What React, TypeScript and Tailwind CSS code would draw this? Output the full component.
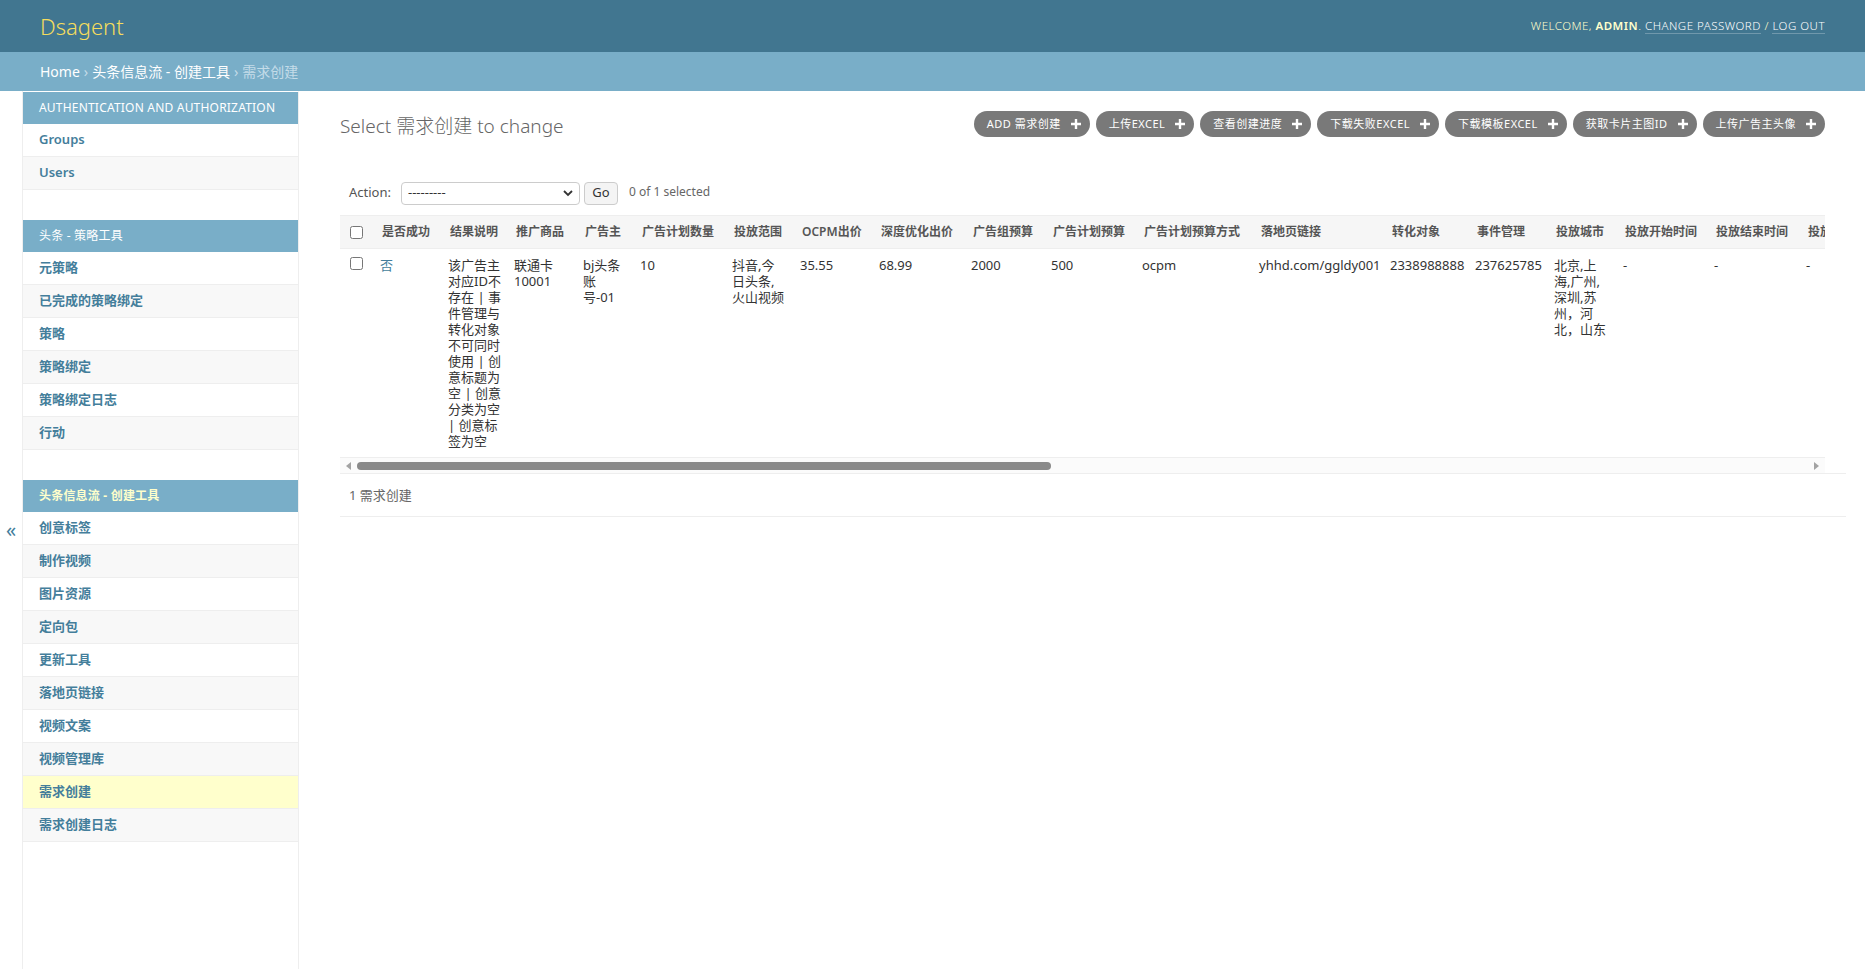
import React from "react";

const FONT = "font-[family-name:'Noto_Sans','Noto_Sans_CJK_SC',sans-serif]";

type Section = { title: string; current?: boolean; items: string[]; active?: string };

const sections: Section[] = [
  { title: "Authentication and Authorization", items: ["Groups", "Users"] },
  {
    title: "头条 - 策略工具",
    items: ["元策略", "已完成的策略绑定", "策略", "策略绑定", "策略绑定日志", "行动"],
  },
  {
    title: "头条信息流 - 创建工具",
    current: true,
    active: "需求创建",
    items: [
      "创意标签",
      "制作视频",
      "图片资源",
      "定向包",
      "更新工具",
      "落地页链接",
      "视频文案",
      "视频管理库",
      "需求创建",
      "需求创建日志",
    ],
  },
];

const tools = ["ADD 需求创建", "上传EXCEL", "查看创建进度", "下载失败EXCEL", "下载模板EXCEL", "获取卡片主图ID", "上传广告主头像"];

type Col = { h: string; w: number; v: React.ReactNode; link?: boolean };

const L = (lines: string[]) => (
  <span className="whitespace-nowrap">
    {lines.map((l, i) => (
      <React.Fragment key={i}>
        {l}
        {i < lines.length - 1 && <br />}
      </React.Fragment>
    ))}
  </span>
);

const cols: Col[] = [
  { h: "是否成功", w: 68, v: "否", link: true },
  {
    h: "结果说明",
    w: 66,
    v: L([
      "该广告主",
      "对应ID不",
      "存在 | 事",
      "件管理与",
      "转化对象",
      "不可同时",
      "使用 | 创",
      "意标题为",
      "空 | 创意",
      "分类为空",
      "| 创意标",
      "签为空",
    ]),
  },
  { h: "推广商品", w: 69, v: L(["联通卡", "10001"]) },
  { h: "广告主", w: 57, v: L(["bj头条", "账", "号-01"]) },
  { h: "广告计划数量", w: 92, v: "10" },
  { h: "投放范围", w: 68, v: L(["抖音,今", "日头条,", "火山视频"]) },
  { h: "OCPM出价", w: 79, v: "35.55" },
  { h: "深度优化出价", w: 92, v: "68.99" },
  { h: "广告组预算", w: 80, v: "2000" },
  { h: "广告计划预算", w: 91, v: "500" },
  { h: "广告计划预算方式", w: 117, v: "ocpm" },
  { h: "落地页链接", w: 131, v: "yhhd.com/ggldy001" },
  { h: "转化对象", w: 85, v: "2338988888" },
  { h: "事件管理", w: 79, v: "237625785" },
  { h: "投放城市", w: 69, v: L(["北京,上", "海,广州,", "深圳,苏", "州，河", "北，山东"]) },
  { h: "投放开始时间", w: 91, v: "-" },
  { h: "投放结束时间", w: 92, v: "-" },
  { h: "投放时段", w: 92, v: "-" },
];

function Plus() {
  return (
    <svg width="10" height="10" viewBox="0 0 10 10" className="shrink-0">
      <path d="M3.8 0h2.4v3.8H10v2.4H6.2V10H3.8V6.2H0V3.8h3.8z" fill="#fff" />
    </svg>
  );
}

function Sidebar() {
  return (
    <nav className="w-[276px] shrink-0 bg-white border-r border-[#eee] border-t border-t-transparent">
      {sections.map((s, si) => (
        <div key={si} className="mb-[30px]">
          <div
            className={`h-[32px] flex items-center pl-4 text-[12px] uppercase tracking-[0.2px] bg-[#79aec8] whitespace-nowrap ${
              s.current ? "text-[#ffc] font-bold" : "text-white"
            }`}
          >
            {s.title}
          </div>
          {s.items.map((it, i) => (
            <div
              key={it}
              className={`h-[33px] flex items-center pl-4 border-b border-[#eee] text-[13px] font-semibold text-[#447e9b] ${
                s.active === it ? "bg-[#ffc]" : i % 2 === 1 ? "bg-[#f8f8f8]" : "bg-white"
              }`}
            >
              {it}
            </div>
          ))}
        </div>
      ))}
    </nav>
  );
}

export default function App() {
  const total = 32 + cols.reduce((a, c) => a + c.w, 0);
  return (
    <div className={`${FONT} min-h-[969px] bg-white text-[#333] text-[13px]`}>
      <header className="h-[52px] bg-[#417690] px-10 flex items-center justify-between">
        <div className="text-[22px] font-light text-[#f5dd5d] leading-[32px]">Dsagent</div>
        <div className="text-[11.5px] uppercase tracking-[0.5px] font-light text-[#ffc]">
          Welcome, <strong className="font-semibold">admin</strong>.{" "}
          <span className="border-b border-white/25 text-white">Change password</span> /{" "}
          <span className="border-b border-white/25 text-white">Log out</span>
        </div>
      </header>
      <div className="h-[39px] bg-[#79aec8] px-10 flex items-center text-[14px] text-[#c4dce8]">
        <span className="text-white">Home</span>
        <span className="mx-1">›</span>
        <span className="text-white">头条信息流 - 创建工具</span>
        <span className="mx-1">›</span>
        <span>需求创建</span>
      </div>
      <div className="flex min-h-[878px]">
        <div className="w-[23px] shrink-0 border-r border-[#eee] flex items-center justify-center text-[20px] text-[#447e9b]">
          «
        </div>
        <Sidebar />
        <main className="flex-1 min-w-0 pl-[41px] pr-[19px] pt-5">
          <div className="flex items-start justify-between pr-[21px]">
            <h1 className="text-[19px] font-light text-[#666] leading-[30px]">Select 需求创建 to change</h1>
            <ul className="flex gap-[6px]">
              {tools.map((t) => (
                <li
                  key={t}
                  className="h-[26px] rounded-[15px] bg-[#797979] text-white text-[11px] tracking-[0.5px] uppercase pl-[13px] pr-[9px] flex items-center gap-[10px]"
                >
                  <span>{t}</span>
                  <Plus />
                </li>
              ))}
            </ul>
          </div>

          <div className="mt-[35px] h-[34px] flex items-center pl-[9px] pr-[21px]">
            <span className="text-[13px] text-[#555]">Action:</span>
            <div className="ml-[10px] w-[179px] h-[23px] border border-[#ccc] rounded-[4px] bg-white flex items-center justify-between px-[6px] text-[13px] text-[#333]">
              <span>---------</span>
              <svg width="10" height="7" viewBox="0 0 10 7">
                <path d="M1 1l4 4 4-4" stroke="#333" strokeWidth="1.8" fill="none" />
              </svg>
            </div>
            <div className="ml-[4px] w-[34px] h-[23px] border border-[#ccc] rounded-[4px] bg-[#f4f4f4] flex items-center justify-center text-[13px] text-[#333]">
              Go
            </div>
            <span className="ml-[11px] text-[12px] text-[#666] -mt-[3px]">0 of 1 selected</span>
          </div>

          <div className="mt-[5px] mr-[21px] overflow-hidden">
            <table className="table-fixed border-collapse" style={{ width: total }}>
              <colgroup>
                <col style={{ width: 32 }} />
                {cols.map((c) => (
                  <col key={c.h} style={{ width: c.w }} />
                ))}
              </colgroup>
              <thead>
                <tr className="h-[33px] bg-[#f6f6f6] border-t border-b border-[#eee]">
                  <th className="text-center align-middle">
                    <input type="checkbox" className="w-[13px] h-[13px] align-middle" readOnly />
                  </th>
                  {cols.map((c) => (
                    <th
                      key={c.h}
                      className="px-[10px] text-left text-[12px] font-semibold text-[#555] whitespace-nowrap overflow-hidden align-middle"
                    >
                      {c.h}
                    </th>
                  ))}
                </tr>
              </thead>
              <tbody>
                <tr className="border-b border-[#eee]">
                  <td className="text-center align-top pt-[7px]">
                    <input type="checkbox" className="w-[13px] h-[13px]" readOnly />
                  </td>
                  {cols.map((c) => (
                    <td
                      key={c.h}
                      className={`p-2 align-top text-[13px] leading-[16px] whitespace-nowrap ${
                        c.link ? "text-[#447e9b]" : "text-[#333]"
                      }`}
                    >
                      {c.v}
                    </td>
                  ))}
                </tr>
              </tbody>
            </table>
          </div>

          <div className="mr-[21px] h-[15px] bg-[#fbfbfb] flex items-center">
            <div className="w-[17px] flex justify-center">
              <svg width="5" height="8" viewBox="0 0 5 8">
                <path d="M5 0v8L0 4z" fill="#a3a3a3" />
              </svg>
            </div>
            <div className="w-[694px] h-[8px] rounded-full bg-[#8a8a8a]" />
            <div className="flex-1" />
            <div className="w-[17px] flex justify-center">
              <svg width="5" height="8" viewBox="0 0 5 8">
                <path d="M0 0v8l5-4z" fill="#a3a3a3" />
              </svg>
            </div>
          </div>

          <div className="border-t border-b border-[#eee] py-[10px] pl-[9px] leading-[22px] text-[13px] text-[#666]">
            1 需求创建
          </div>
        </main>
      </div>
    </div>
  );
}
